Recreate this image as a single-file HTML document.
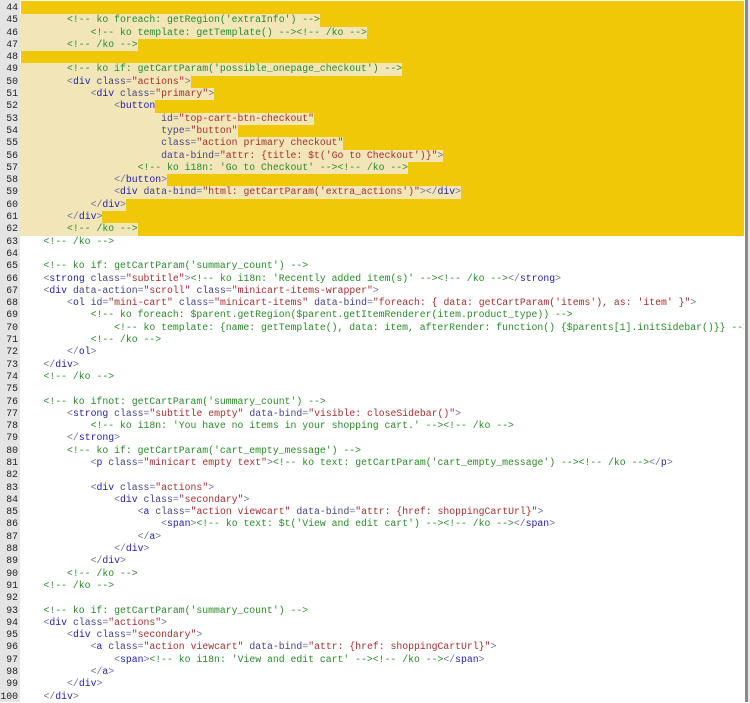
<!DOCTYPE html>
<html><head><meta charset="utf-8"><style>
html,body{margin:0;padding:0;background:#fff;width:750px;height:702px;overflow:hidden}
#g{position:absolute;left:0;top:0;width:20px;height:702px;background:#e4e4e4}
#sb{position:absolute;left:745px;top:0;width:3px;height:702px;background:#8a8a8a}
#sb2{position:absolute;left:748px;top:0;width:2px;height:702px;background:#e8e8e8}
#hl{position:absolute;left:21px;top:1px;width:723px;height:235px;background:#f0c808}
#code{position:absolute;left:0;top:2px;width:744px;font-family:"Liberation Mono",monospace;font-size:9.8px;line-height:12.3px;overflow:hidden}
.l{position:relative;height:12.3px;white-space:pre;overflow:hidden}
.n{position:absolute;left:0;width:18px;text-align:right;color:#222}
.x{position:absolute;left:20px;color:#000}
.h .x{background:#f2e5b8}
.p{color:#6f6f9a}.t{color:#1e1ea8}.a{color:#444488}.s{color:#a33030}.c{color:#2a8a2a}
</style></head><body>
<div id="g"></div><div id="hl"></div><div id="sb"></div><div id="sb2"></div>
<div id="code">
<div class="l"><span class="n">44</span></div>
<div class="l h"><span class="n">45</span><span class="x">        <span class="c">&lt;!-- ko foreach: getRegion('extraInfo') --&gt;</span></span></div>
<div class="l h"><span class="n">46</span><span class="x">            <span class="c">&lt;!-- ko template: getTemplate() --&gt;&lt;!-- /ko --&gt;</span></span></div>
<div class="l h"><span class="n">47</span><span class="x">        <span class="c">&lt;!-- /ko --&gt;</span></span></div>
<div class="l"><span class="n">48</span></div>
<div class="l h"><span class="n">49</span><span class="x">        <span class="c">&lt;!-- ko if: getCartParam('possible_onepage_checkout') --&gt;</span></span></div>
<div class="l h"><span class="n">50</span><span class="x">        <span class="p">&lt;</span><span class="t">div</span> <span class="a">class</span><span class="p">=</span><span class="s">"actions"</span><span class="p">&gt;</span></span></div>
<div class="l h"><span class="n">51</span><span class="x">            <span class="p">&lt;</span><span class="t">div</span> <span class="a">class</span><span class="p">=</span><span class="s">"primary"</span><span class="p">&gt;</span></span></div>
<div class="l h"><span class="n">52</span><span class="x">                <span class="p">&lt;</span><span class="t">button</span></span></div>
<div class="l h"><span class="n">53</span><span class="x">                        <span class="a">id</span><span class="p">=</span><span class="s">"top-cart-btn-checkout"</span></span></div>
<div class="l h"><span class="n">54</span><span class="x">                        <span class="a">type</span><span class="p">=</span><span class="s">"button"</span></span></div>
<div class="l h"><span class="n">55</span><span class="x">                        <span class="a">class</span><span class="p">=</span><span class="s">"action primary checkout"</span></span></div>
<div class="l h"><span class="n">56</span><span class="x">                        <span class="a">data-bind</span><span class="p">=</span><span class="s">"attr: {title: $t('Go to Checkout')}"</span><span class="p">&gt;</span></span></div>
<div class="l h"><span class="n">57</span><span class="x">                    <span class="c">&lt;!-- ko i18n: 'Go to Checkout' --&gt;&lt;!-- /ko --&gt;</span></span></div>
<div class="l h"><span class="n">58</span><span class="x">                <span class="p">&lt;/</span><span class="t">button</span><span class="p">&gt;</span></span></div>
<div class="l h"><span class="n">59</span><span class="x">                <span class="p">&lt;</span><span class="t">div</span> <span class="a">data-bind</span><span class="p">=</span><span class="s">"html: getCartParam('extra_actions')"</span><span class="p">&gt;&lt;/</span><span class="t">div</span><span class="p">&gt;</span></span></div>
<div class="l h"><span class="n">60</span><span class="x">            <span class="p">&lt;/</span><span class="t">div</span><span class="p">&gt;</span></span></div>
<div class="l h"><span class="n">61</span><span class="x">        <span class="p">&lt;/</span><span class="t">div</span><span class="p">&gt;</span></span></div>
<div class="l h"><span class="n">62</span><span class="x">        <span class="c">&lt;!-- /ko --&gt;</span></span></div>
<div class="l"><span class="n">63</span><span class="x">    <span class="c">&lt;!-- /ko --&gt;</span></span></div>
<div class="l"><span class="n">64</span></div>
<div class="l"><span class="n">65</span><span class="x">    <span class="c">&lt;!-- ko if: getCartParam('summary_count') --&gt;</span></span></div>
<div class="l"><span class="n">66</span><span class="x">    <span class="p">&lt;</span><span class="t">strong</span> <span class="a">class</span><span class="p">=</span><span class="s">"subtitle"</span><span class="p">&gt;</span><span class="c">&lt;!-- ko i18n: 'Recently added item(s)' --&gt;&lt;!-- /ko --&gt;</span><span class="p">&lt;/</span><span class="t">strong</span><span class="p">&gt;</span></span></div>
<div class="l"><span class="n">67</span><span class="x">    <span class="p">&lt;</span><span class="t">div</span> <span class="a">data-action</span><span class="p">=</span><span class="s">"scroll"</span> <span class="a">class</span><span class="p">=</span><span class="s">"minicart-items-wrapper"</span><span class="p">&gt;</span></span></div>
<div class="l"><span class="n">68</span><span class="x">        <span class="p">&lt;</span><span class="t">ol</span> <span class="a">id</span><span class="p">=</span><span class="s">"mini-cart"</span> <span class="a">class</span><span class="p">=</span><span class="s">"minicart-items"</span> <span class="a">data-bind</span><span class="p">=</span><span class="s">"foreach: { data: getCartParam('items'), as: 'item' }"</span><span class="p">&gt;</span></span></div>
<div class="l"><span class="n">69</span><span class="x">            <span class="c">&lt;!-- ko foreach: $parent.getRegion($parent.getItemRenderer(item.product_type)) --&gt;</span></span></div>
<div class="l"><span class="n">70</span><span class="x">                <span class="c">&lt;!-- ko template: {name: getTemplate(), data: item, afterRender: function() {$parents[1].initSidebar()}} --&gt;&lt;!-- /ko --&gt;</span></span></div>
<div class="l"><span class="n">71</span><span class="x">            <span class="c">&lt;!-- /ko --&gt;</span></span></div>
<div class="l"><span class="n">72</span><span class="x">        <span class="p">&lt;/</span><span class="t">ol</span><span class="p">&gt;</span></span></div>
<div class="l"><span class="n">73</span><span class="x">    <span class="p">&lt;/</span><span class="t">div</span><span class="p">&gt;</span></span></div>
<div class="l"><span class="n">74</span><span class="x">    <span class="c">&lt;!-- /ko --&gt;</span></span></div>
<div class="l"><span class="n">75</span></div>
<div class="l"><span class="n">76</span><span class="x">    <span class="c">&lt;!-- ko ifnot: getCartParam('summary_count') --&gt;</span></span></div>
<div class="l"><span class="n">77</span><span class="x">        <span class="p">&lt;</span><span class="t">strong</span> <span class="a">class</span><span class="p">=</span><span class="s">"subtitle empty"</span> <span class="a">data-bind</span><span class="p">=</span><span class="s">"visible: closeSidebar()"</span><span class="p">&gt;</span></span></div>
<div class="l"><span class="n">78</span><span class="x">            <span class="c">&lt;!-- ko i18n: 'You have no items in your shopping cart.' --&gt;&lt;!-- /ko --&gt;</span></span></div>
<div class="l"><span class="n">79</span><span class="x">        <span class="p">&lt;/</span><span class="t">strong</span><span class="p">&gt;</span></span></div>
<div class="l"><span class="n">80</span><span class="x">        <span class="c">&lt;!-- ko if: getCartParam('cart_empty_message') --&gt;</span></span></div>
<div class="l"><span class="n">81</span><span class="x">            <span class="p">&lt;</span><span class="t">p</span> <span class="a">class</span><span class="p">=</span><span class="s">"minicart empty text"</span><span class="p">&gt;</span><span class="c">&lt;!-- ko text: getCartParam('cart_empty_message') --&gt;&lt;!-- /ko --&gt;</span><span class="p">&lt;/</span><span class="t">p</span><span class="p">&gt;</span></span></div>
<div class="l"><span class="n">82</span></div>
<div class="l"><span class="n">83</span><span class="x">            <span class="p">&lt;</span><span class="t">div</span> <span class="a">class</span><span class="p">=</span><span class="s">"actions"</span><span class="p">&gt;</span></span></div>
<div class="l"><span class="n">84</span><span class="x">                <span class="p">&lt;</span><span class="t">div</span> <span class="a">class</span><span class="p">=</span><span class="s">"secondary"</span><span class="p">&gt;</span></span></div>
<div class="l"><span class="n">85</span><span class="x">                    <span class="p">&lt;</span><span class="t">a</span> <span class="a">class</span><span class="p">=</span><span class="s">"action viewcart"</span> <span class="a">data-bind</span><span class="p">=</span><span class="s">"attr: {href: shoppingCartUrl}"</span><span class="p">&gt;</span></span></div>
<div class="l"><span class="n">86</span><span class="x">                        <span class="p">&lt;</span><span class="t">span</span><span class="p">&gt;</span><span class="c">&lt;!-- ko text: $t('View and edit cart') --&gt;&lt;!-- /ko --&gt;</span><span class="p">&lt;/</span><span class="t">span</span><span class="p">&gt;</span></span></div>
<div class="l"><span class="n">87</span><span class="x">                    <span class="p">&lt;/</span><span class="t">a</span><span class="p">&gt;</span></span></div>
<div class="l"><span class="n">88</span><span class="x">                <span class="p">&lt;/</span><span class="t">div</span><span class="p">&gt;</span></span></div>
<div class="l"><span class="n">89</span><span class="x">            <span class="p">&lt;/</span><span class="t">div</span><span class="p">&gt;</span></span></div>
<div class="l"><span class="n">90</span><span class="x">        <span class="c">&lt;!-- /ko --&gt;</span></span></div>
<div class="l"><span class="n">91</span><span class="x">    <span class="c">&lt;!-- /ko --&gt;</span></span></div>
<div class="l"><span class="n">92</span></div>
<div class="l"><span class="n">93</span><span class="x">    <span class="c">&lt;!-- ko if: getCartParam('summary_count') --&gt;</span></span></div>
<div class="l"><span class="n">94</span><span class="x">    <span class="p">&lt;</span><span class="t">div</span> <span class="a">class</span><span class="p">=</span><span class="s">"actions"</span><span class="p">&gt;</span></span></div>
<div class="l"><span class="n">95</span><span class="x">        <span class="p">&lt;</span><span class="t">div</span> <span class="a">class</span><span class="p">=</span><span class="s">"secondary"</span><span class="p">&gt;</span></span></div>
<div class="l"><span class="n">96</span><span class="x">            <span class="p">&lt;</span><span class="t">a</span> <span class="a">class</span><span class="p">=</span><span class="s">"action viewcart"</span> <span class="a">data-bind</span><span class="p">=</span><span class="s">"attr: {href: shoppingCartUrl}"</span><span class="p">&gt;</span></span></div>
<div class="l"><span class="n">97</span><span class="x">                <span class="p">&lt;</span><span class="t">span</span><span class="p">&gt;</span><span class="c">&lt;!-- ko i18n: 'View and edit cart' --&gt;&lt;!-- /ko --&gt;</span><span class="p">&lt;/</span><span class="t">span</span><span class="p">&gt;</span></span></div>
<div class="l"><span class="n">98</span><span class="x">            <span class="p">&lt;/</span><span class="t">a</span><span class="p">&gt;</span></span></div>
<div class="l"><span class="n">99</span><span class="x">        <span class="p">&lt;/</span><span class="t">div</span><span class="p">&gt;</span></span></div>
<div class="l"><span class="n">100</span><span class="x">    <span class="p">&lt;/</span><span class="t">div</span><span class="p">&gt;</span></span></div>
</div>
</body></html>
